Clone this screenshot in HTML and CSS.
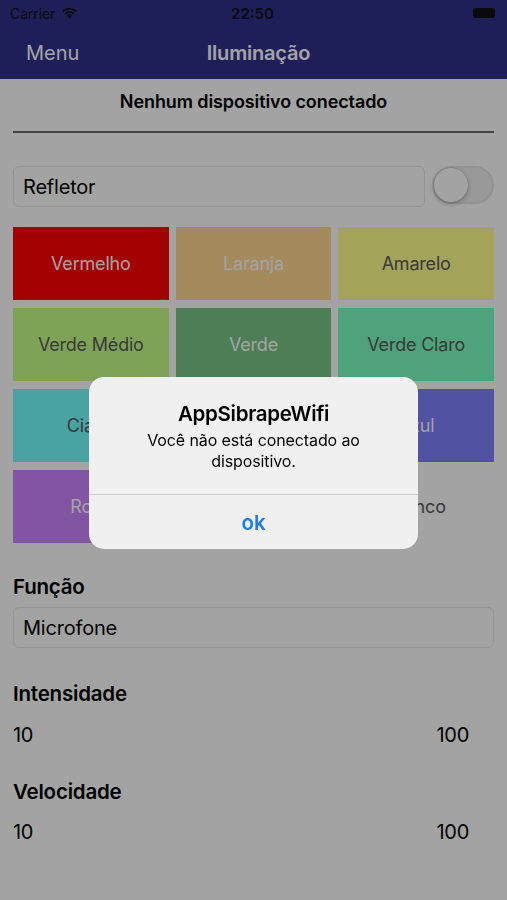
FILE: index.html
```html
<!DOCTYPE html>
<html lang="pt">
<head>
<meta charset="utf-8">
<title>Iluminação</title>
<link rel="stylesheet" href="styles.css">
</head>
<body>
<div class="screen">
  <header class="topbar">
    <div class="status">
      <div class="status-left">
        <span class="carrier">Carrier</span>
        <svg class="wifi" width="17" height="13" viewBox="0 0 17 13">
          <path d="M8.5 12.5 L5.9 9.6 A3.8 3.8 0 0 1 11.1 9.6 Z" fill="#111"/>
          <path d="M3.6 7.2 A7.2 7.2 0 0 1 13.4 7.2 L12.1 8.6 A5.4 5.4 0 0 0 4.9 8.6 Z" fill="#111"/>
          <path d="M1.2 4.6 A10.6 10.6 0 0 1 15.8 4.6 L14.5 6 A8.8 8.8 0 0 0 2.5 6 Z" fill="#111"/>
        </svg>
      </div>
      <span class="clock">22:50</span>
      <div class="status-right">
        <span class="battery"></span>
      </div>
    </div>
    <nav class="navbar">
      <span class="nav-back">Menu</span>
      <span class="nav-title">Iluminação</span>
      <span class="nav-spacer"></span>
    </nav>
  </header>

  <main class="content">
    <p class="device">Nenhum dispositivo conectado</p>
    <hr class="divider">

    <div class="refletor-row">
      <div class="field">Refletor</div>
      <div class="switch"><span class="knob"></span></div>
    </div>

    <div class="colors">
      <div class="tile t-red light">Vermelho</div>
      <div class="tile t-orange light">Laranja</div>
      <div class="tile t-yellow dark">Amarelo</div>
      <div class="tile t-midgreen dark">Verde Médio</div>
      <div class="tile t-green light">Verde</div>
      <div class="tile t-lightgreen dark">Verde Claro</div>
      <div class="tile t-cyan dark">Ciano</div>
      <div class="tile t-lightblue dark"></div>
      <div class="tile t-blue light">Azul</div>
      <div class="tile t-purple light">Roxo</div>
      <div class="tile t-pink light"></div>
      <div class="tile t-white dark">Branco</div>
    </div>

    <h2 class="label label-func">Função</h2>
    <div class="field field-wide">Microfone</div>

    <h2 class="label label-int">Intensidade</h2>
    <div class="range-row"><span>10</span><span>100</span></div>

    <h2 class="label label-vel">Velocidade</h2>
    <div class="range-row range-last"><span>10</span><span>100</span></div>
  </main>
</div>

<div class="dim">
  <div class="alert">
    <div class="alert-body">
      <h3 class="alert-title">AppSibrapeWifi</h3>
      <p class="alert-msg">Você não está conectado ao dispositivo.</p>
    </div>
    <div class="alert-action">ok</div>
  </div>
</div>
</body>
</html>
```

FILE: styles.css
```css
* { box-sizing: border-box; }

html, body {
  margin: 0;
  padding: 0;
  background: #ffffff;
}

body {
  font-family: Inter, "Noto Sans", "Liberation Sans", sans-serif;
  color: #000;
  width: 507px;
  height: 900px;
  overflow: hidden;
}

.screen {
  width: 507px;
  height: 900px;
}

/* ---------- top bar ---------- */
.topbar {
  background: #30308c;
}

.status {
  height: 26px;
  display: flex;
  align-items: center;
  justify-content: space-between;
  padding: 0 12px 0 10px;
}

.status-left {
  display: flex;
  align-items: center;
  gap: 6px;
  width: 120px;
}

.carrier {
  font-size: 14px;
  color: #111;
  letter-spacing: -0.1px;
}

.wifi { display: block; margin-top: -1px; }

.clock {
  font-size: 15px;
  font-weight: 600;
  color: #111;
}

.status-right {
  width: 120px;
  display: flex;
  justify-content: flex-end;
}

.battery {
  display: block;
  width: 22px;
  height: 10px;
  border-radius: 3px;
  background: #111;
}

.navbar {
  height: 53px;
  display: flex;
  align-items: center;
  justify-content: space-between;
  padding: 0 16px 0 26px;
}

.nav-back {
  font-size: 20px;
  color: #fff;
  width: 100px;
}

.nav-title {
  font-size: 20px;
  font-weight: 600;
  color: #fff;
  letter-spacing: -0.2px;
}

.nav-spacer { width: 100px; }

/* ---------- content ---------- */
.content {
  padding: 0 13px;
}

.device {
  margin: 12px 0 0;
  text-align: center;
  font-size: 18px;
  font-weight: 600;
  line-height: 22px;
  letter-spacing: -0.1px;
}

.divider {
  margin: 18px 0 0;
  border: 0;
  height: 2px;
  background: #6a6a6a;
}

.refletor-row {
  margin-top: 33px;
  display: flex;
  align-items: flex-start;
  gap: 7px;
}

.field {
  flex: 1;
  height: 41px;
  border: 1px solid #e8e8e8;
  border-radius: 6px;
  display: flex;
  align-items: center;
  padding: 0 9px;
  font-size: 20px;
  letter-spacing: -0.2px;
}

.switch {
  width: 62px;
  height: 38px;
  border-radius: 19px;
  background: #efefef;
  border: 2px solid #e6e6e6;
  flex-shrink: 0;
  display: flex;
  align-items: center;
}

.knob {
  width: 34px;
  height: 34px;
  border-radius: 50%;
  background: #fff;
  box-shadow: 0 2px 5px rgba(0,0,0,0.25), 0 0 0 0.5px rgba(0,0,0,0.12);
}

.colors {
  margin-top: 20px;
  display: grid;
  grid-template-columns: repeat(3, 1fr);
  grid-auto-rows: 73px;
  gap: 8px 7px;
}

.tile {
  display: flex;
  align-items: center;
  justify-content: center;
  font-size: 18px;
  letter-spacing: -0.2px;
}

.tile.light { color: #ffffff; }
.tile.dark { color: #5a5a5a; }

.t-red { background: #ff0000; }
.t-orange { background: #ffd990; }
.t-yellow { background: #ffff8c; }
.t-midgreen { background: #c5ff89; }
.t-green { background: #7bc685; }
.t-lightgreen { background: #7affc2; }
.t-cyan { background: #74ffff; }
.t-lightblue { background: #8cc8ff; }
.t-blue { background: #8080ff; }
.t-purple { background: #cc85ff; }
.t-pink { background: #ff88cc; }
.t-white { background: #ffffff; }

.label {
  margin: 0;
  font-size: 20.5px;
  font-weight: 600;
  line-height: 25px;
  letter-spacing: -0.2px;
}

.label-func { margin-top: 31px; }
.label-int { margin-top: 33px; }
.label-vel { margin-top: 31px; }

.field-wide {
  margin-top: 8px;
}

.range-row {
  margin-top: 17px;
  display: flex;
  justify-content: space-between;
  padding-right: 25px;
  font-size: 20px;
  line-height: 25px;
  letter-spacing: -0.3px;
}

.range-last { margin-top: 16px; }

/* ---------- alert ---------- */
.dim {
  position: fixed;
  inset: 0;
  background: rgba(0, 0, 0, 0.36);
  display: flex;
  justify-content: center;
  align-items: flex-start;
  padding-top: 377px;
}

.alert {
  width: 329px;
  background: #f0f0f0;
  border-radius: 15px;
  overflow: hidden;
  text-align: center;
}

.alert-body {
  padding: 24px 20px 22px;
  border-bottom: 1px solid #cfcfcf;
}

.alert-title {
  margin: 0;
  font-size: 20.5px;
  font-weight: 600;
  line-height: 25px;
  letter-spacing: -0.3px;
}

.alert-msg {
  margin: 4px auto 0;
  font-size: 16px;
  line-height: 21px;
  width: 230px;
  letter-spacing: -0.1px;
}

.alert-action {
  height: 54px;
  display: flex;
  align-items: center;
  justify-content: center;
  font-size: 20.5px;
  font-weight: 600;
  color: #1a7ef2;
}
```
